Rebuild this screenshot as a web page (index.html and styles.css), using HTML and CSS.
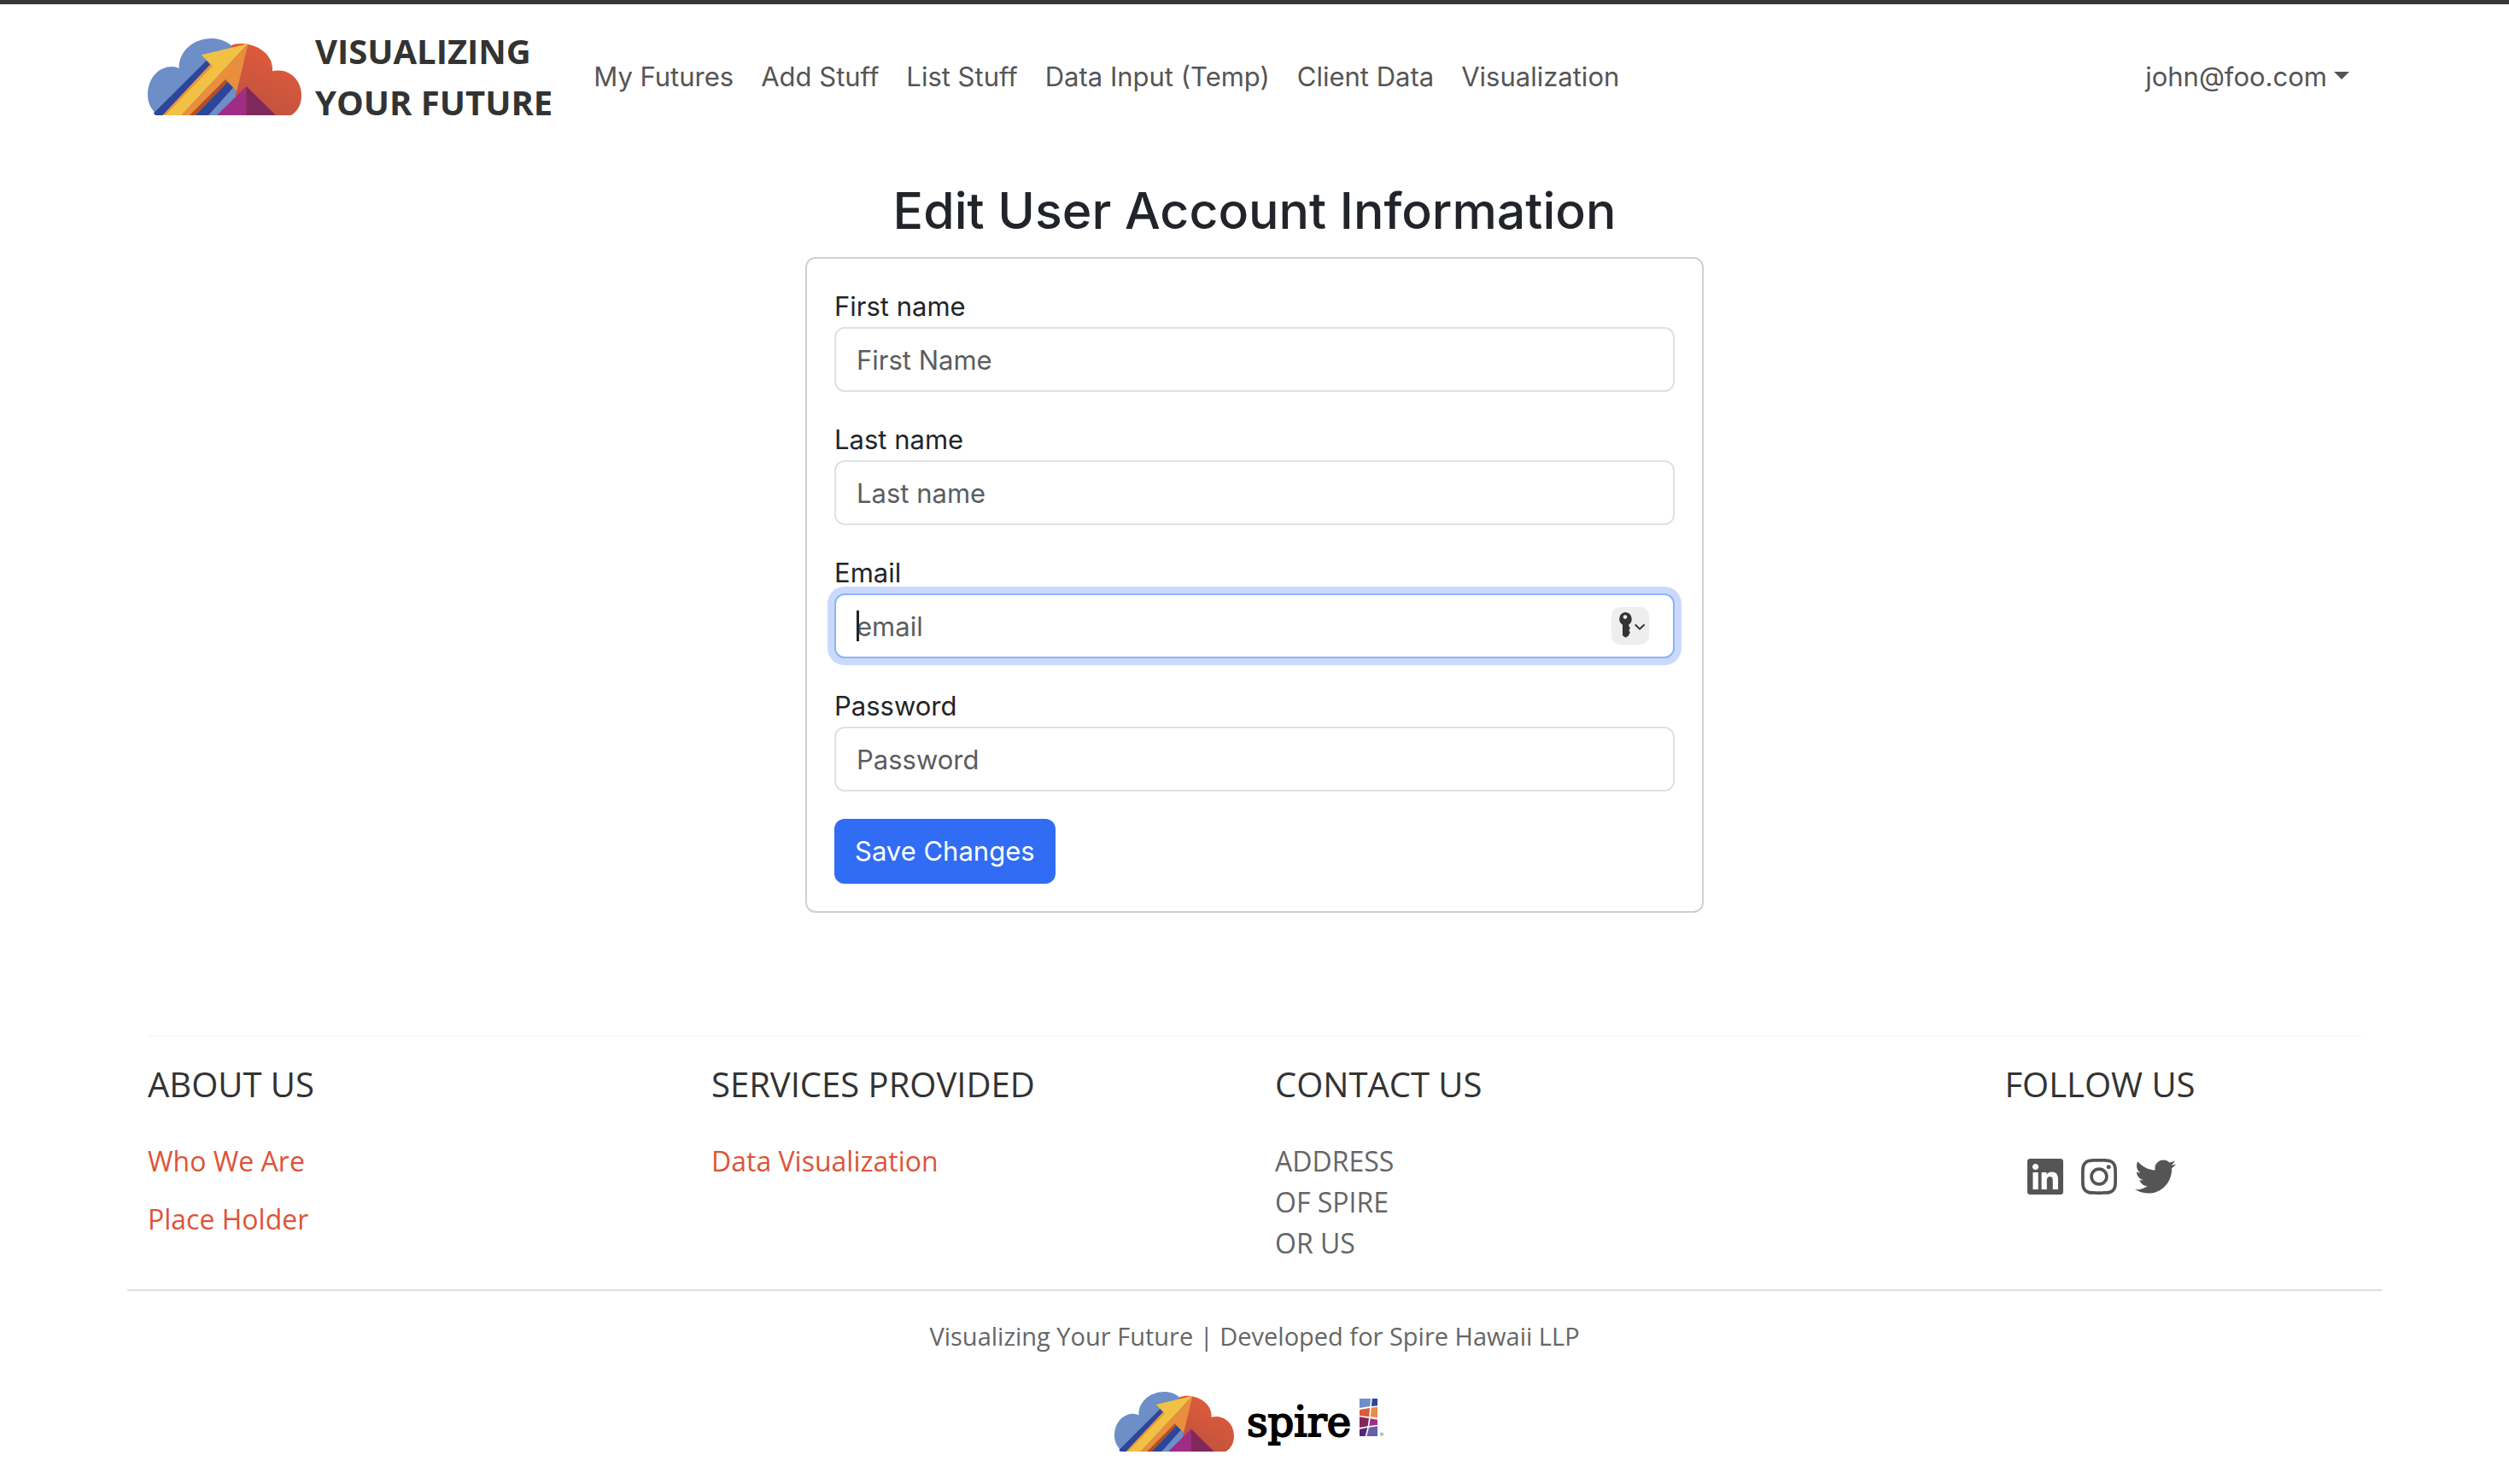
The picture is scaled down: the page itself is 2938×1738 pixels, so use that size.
FILE: index.html
```html
<!DOCTYPE html>
<html lang="en">
<head>
<meta charset="utf-8">
<meta name="viewport" content="width=device-width, initial-scale=1">
<title>Visualizing Your Future</title>
<link rel="stylesheet" href="styles.css">
</head>
<body>
<svg class="defs" aria-hidden="true">
  <defs>
    <linearGradient id="ember" x1="0.7" y1="0.2" x2="0.3" y2="0.9">
      <stop offset="0" stop-color="#dc5a3b"/>
      <stop offset="1" stop-color="#bf523f"/>
    </linearGradient>
    <symbol id="cloud" viewBox="42 135 540 270">
      <path fill="#6d8ec7" d="M70 405L64 392C49 375 42 355 42 333C42 275 80 234 127 234Q141 234 152 240C150 182 200 135 267 135C295 135 320 145 338 162L390 300L352 330L285 405Z"/>
      <path fill="url(#ember)" d="M335 160C350 153 372 151 395 156C448 166 484 205 480 250C532 236 582 275 582 335C582 368 567 393 545 405H285L350 345L352 320L340 200Z"/>
      <path fill="#2c4699" d="M248 213L62 398L70 405H97L262 228Z"/>
      <path fill="#e8963a" d="M262 226L94 405H108L275 235Z"/>
      <path fill="#f2c144" d="M395 153L230 193L270 232L104 405H160Z"/>
      <path fill="#e88e3d" d="M395 153L355 320L315 280L190 405H160Z"/>
      <path fill="#b94d1e" d="M315 279L323 288L210 405H189Z"/>
      <path fill="#6d8ec7" d="M342 308L352 320L350 345L290 405H255Z"/>
      <path fill="#2c4699" d="M323 288L342 308L255 405H210Z"/>
      <path fill="#9f2d86" d="M388 303L285 405H388Z"/>
      <path fill="#7f285c" d="M388 303V405H492Z"/>
    </symbol>
  </defs>
</svg>

<header class="site-header">
  <nav class="container navbar" aria-label="Main">
    <a class="brand" href="#">
      <svg class="brand-logo" role="img" aria-label="Cloud logo"><use href="#cloud"/></svg>
      <span class="brand-text">VISUALIZING<br>YOUR FUTURE</span>
    </a>
    <div class="nav-links">
      <a class="nav-link" href="#">My Futures</a>
      <a class="nav-link" href="#">Add Stuff</a>
      <a class="nav-link" href="#">List Stuff</a>
      <a class="nav-link" href="#">Data Input (Temp)</a>
      <a class="nav-link" href="#">Client Data</a>
      <a class="nav-link" href="#">Visualization</a>
    </div>
    <button class="account" type="button" aria-haspopup="true">john@foo.com<span class="caret"></span></button>
  </nav>
</header>

<main class="container main">
  <h2 class="title">Edit User Account Information</h2>
  <form class="card">
    <div class="field">
      <label for="first">First name</label>
      <input class="control" id="first" type="text" placeholder="First Name">
    </div>
    <div class="field">
      <label for="last">Last name</label>
      <input class="control" id="last" type="text" placeholder="Last name">
    </div>
    <div class="field">
      <label for="email">Email</label>
      <div class="control-wrap">
        <input class="control is-active" id="email" type="email" placeholder="email">
        <span class="text-cursor"></span>
        <button class="key-button" type="button" aria-label="Fill saved login">
          <svg viewBox="0 0 132 132" aria-hidden="true">
            <path fill="#333" fill-rule="evenodd" d="M48 18a24 24 0 0 1 13 43.500V66l5 8-5 7 5 8-5 8v3L50 107 39 100V62A24 24 0 0 1 48 18zM48 28a7 7 0 1 0 .1 0z"/>
            <path fill="none" stroke="#333" stroke-width="6" stroke-linecap="round" stroke-linejoin="round" d="M85 63L99 77L114 63"/>
          </svg>
        </button>
      </div>
    </div>
    <div class="field">
      <label for="password">Password</label>
      <input class="control" id="password" type="password" placeholder="Password">
    </div>
    <button class="save" type="submit">Save Changes</button>
  </form>
</main>

<footer class="container footer">
  <div class="footer-columns">
    <section>
      <h5>ABOUT US</h5>
      <ul>
        <li><a href="#">Who We Are</a></li>
        <li><a href="#">Place Holder</a></li>
      </ul>
    </section>
    <section>
      <h5>SERVICES PROVIDED</h5>
      <ul>
        <li><a href="#">Data Visualization</a></li>
      </ul>
    </section>
    <section>
      <h5>CONTACT US</h5>
      <address>ADDRESS<br>OF SPIRE<br>OR US</address>
    </section>
    <section class="follow">
      <h5>FOLLOW US</h5>
      <div class="social">
        <a href="#" aria-label="LinkedIn"><svg class="square" viewBox="0 0 448 512"><path d="M416 32H31.900C14.300 32 0 46.500 0 64.300v383.400C0 465.500 14.300 480 31.900 480H416c17.600 0 32-14.500 32-32.300V64.300c0-17.800-14.400-32.300-32-32.300zM135.400 416H69V202.200h66.500V416zm-33.200-243c-21.300 0-38.500-17.300-38.500-38.500S80.900 96 102.200 96c21.200 0 38.500 17.300 38.500 38.500 0 21.300-17.200 38.500-38.500 38.500zm282.100 243h-66.400V312c0-24.800-.5-56.700-34.500-56.700-34.600 0-39.900 27-39.900 54.900V416h-66.400V202.200h63.700v29.200h.9c8.900-16.800 30.600-34.500 62.900-34.500 67.200 0 79.700 44.300 79.700 101.900V416z"/></svg></a>
        <a href="#" aria-label="Instagram"><svg class="square" viewBox="0 0 448 512"><path d="M224.100 141c-63.600 0-114.900 51.300-114.900 114.900s51.300 114.900 114.900 114.900S339 319.500 339 255.900 287.700 141 224.100 141zm0 189.600c-41.100 0-74.700-33.500-74.700-74.700s33.500-74.700 74.700-74.700 74.700 33.500 74.700 74.700-33.600 74.700-74.700 74.700zm146.400-194.300c0 14.900-12 26.800-26.800 26.800-14.900 0-26.800-12-26.800-26.800s12-26.800 26.800-26.800 26.800 12 26.800 26.800zm76.100 27.200c-1.700-35.900-9.900-67.700-36.200-93.900-26.200-26.200-58-34.400-93.900-36.200-37-2.100-147.900-2.100-184.900 0-35.800 1.700-67.600 9.900-93.900 36.100s-34.400 58-36.200 93.900c-2.100 37-2.100 147.900 0 184.900 1.700 35.900 9.900 67.700 36.200 93.900s58 34.400 93.900 36.200c37 2.100 147.900 2.100 184.900 0 35.900-1.700 67.700-9.900 93.900-36.200 26.200-26.200 34.400-58 36.200-93.900 2.100-37 2.100-147.800 0-184.800zM398.800 388c-7.800 19.600-22.900 34.700-42.600 42.600-29.500 11.700-99.500 9-132.100 9s-102.700 2.600-132.100-9c-19.600-7.800-34.700-22.900-42.600-42.600-11.700-29.500-9-99.500-9-132.100s-2.600-102.700 9-132.100c7.800-19.600 22.900-34.700 42.600-42.600 29.500-11.700 99.500-9 132.100-9s102.700-2.600 132.100 9c19.600 7.800 34.700 22.900 42.600 42.600 11.700 29.500 9 99.500 9 132.100s2.700 102.700-9 132.100z"/></svg></a>
        <a href="#" aria-label="Twitter"><svg viewBox="0 0 512 512"><path d="M459.370 151.716c.325 4.548.325 9.097.325 13.645 0 138.720-105.583 298.558-298.558 298.558-59.452 0-114.680-17.219-161.137-47.106 8.447.974 16.568 1.299 25.340 1.299 49.055 0 94.213-16.568 130.274-44.832-46.132-.975-84.792-31.188-98.112-72.772 6.498.974 12.995 1.624 19.818 1.624 9.421 0 18.843-1.300 27.614-3.573-48.081-9.747-84.143-51.980-84.143-102.985v-1.299c13.969 7.797 30.214 12.670 47.431 13.319-28.264-18.843-46.781-51.005-46.781-87.391 0-19.492 5.197-37.360 14.294-52.954 51.655 63.675 129.300 105.258 216.365 109.807-1.624-7.797-2.599-15.918-2.599-24.040 0-57.828 46.782-104.934 104.934-104.934 30.213 0 57.502 12.670 76.670 33.137 23.715-4.548 46.456-13.320 66.599-25.340-7.798 24.366-24.366 44.833-46.132 57.827 21.117-2.273 41.584-8.122 60.426-16.243-14.292 20.791-32.161 39.308-52.628 54.253z"/></svg></a>
      </div>
    </section>
  </div>
  <div class="footer-base">
    <p>Visualizing Your Future | Developed for Spire Hawaii LLP</p>
    <div class="partners">
      <svg class="partner-cloud" role="img" aria-label="Cloud logo"><use href="#cloud"/></svg>
      <span class="spire">spire</span>
      <svg class="spire-mark" viewBox="0 0 87 132" aria-hidden="true">
        <path fill="#6d8ec7" d="M0 0H39L37 27L0 33Z"/>
        <path fill="#2c4699" d="M44 0H63V25L42 27Z"/>
        <path fill="#dc5a3b" d="M0 39L36 33L34 64L0 60Z"/>
        <path fill="#e88e3d" d="M41 32L63 29V67L39 64Z"/>
        <path fill="#7f285c" d="M0 64L33 69L29 97L0 102Z"/>
        <path fill="#9f2d86" d="M38 70L63 74V92L34 96Z"/>
        <path fill="#53287a" d="M0 107L28 102L20 132H0Z"/>
        <path fill="#6560a8" d="M33 101L63 97V132H25Z"/>
        <circle cx="78" cy="125" r="5" fill="none" stroke="#777" stroke-width="2"/>
        <circle cx="78" cy="125" r="2" fill="#777"/>
      </svg>
    </div>
  </div>
</footer>
</body>
</html>
```
FILE: styles.css
```css
* {
  box-sizing: border-box;
}

body {
  margin: 0;
  background: #fff;
  color: #212529;
  font-family: Inter, "Liberation Sans", sans-serif;
  font-size: 31px;
  line-height: 48px;
}

a {
  text-decoration: none;
}

button,
input {
  font: inherit;
}

.defs {
  position: absolute;
  width: 0;
  height: 0;
}

.container {
  width: 100%;
  max-width: 2640px;
  margin: 0 auto;
  padding: 0 24px;
}

.site-header {
  border-top: 5px solid #373735;
  padding: 25px 0;
}

.navbar {
  display: flex;
  align-items: center;
}

.brand {
  display: flex;
  align-items: center;
  gap: 16px;
  margin-right: 16px;
  color: #333;
  font: bold 40px/60px "Open Sans", sans-serif;
}

.brand-logo {
  width: 180px;
  height: 90px;
}

.nav-links {
  display: flex;
  flex: 1;
  margin-left: 16px;
}

.nav-link {
  padding: 16px;
  color: #555;
}

.account {
  display: flex;
  align-items: center;
  gap: 8px;
  border: 0;
  padding: 16px 14px;
  background: none;
  color: #555;
}

.caret {
  margin-bottom: 4px;
  border: 9px solid transparent;
  border-top-color: #555;
  border-bottom: 0;
}

.main {
  display: flex;
  flex-direction: column;
  align-items: center;
  padding-top: 34px;
}

.title {
  margin: 0 0 16px;
  font-size: 59px;
  font-weight: 500;
  line-height: 76px;
}

.card {
  width: 100%;
  max-width: 1052px;
  border: 2px solid #d0d0d1;
  border-radius: 12px;
  padding: 32px;
}

.field {
  margin-bottom: 32px;
}

.field label {
  display: block;
}

.control-wrap {
  position: relative;
}

.control {
  display: block;
  width: 100%;
  height: 76px;
  border: 2px solid #dee2e6;
  border-radius: 12px;
  padding: 12px 24px;
  background: #fff;
  color: #212529;
}

.control::placeholder {
  color: #5a5d60;
  opacity: 1;
}

.control.is-active {
  border-color: #8bb4f8;
  box-shadow: 0 0 0 8px #cbd9fc;
}

.text-cursor {
  position: absolute;
  top: 20px;
  left: 26px;
  width: 3px;
  height: 36px;
  background: #212529;
}

.key-button {
  position: absolute;
  top: 16px;
  right: 30px;
  width: 44px;
  height: 44px;
  border: 0;
  border-radius: 10px;
  padding: 0;
  background: #eee;
}

.key-button svg {
  display: block;
}

.save {
  display: block;
  height: 76px;
  border: 0;
  border-radius: 12px;
  padding: 0 24px;
  background: #316cf4;
  color: #fff;
}

.footer {
  margin-top: 143px;
  padding: 0;
  font-family: "Open Sans", sans-serif;
  font-size: 32px;
}

.footer-columns {
  display: grid;
  grid-template-columns: repeat(4, 1fr);
  position: relative;
  border-bottom: 2px solid #ddd;
  padding: 34px 0 30px;
}

.footer-columns::before {
  content: "";
  position: absolute;
  top: 0;
  left: 24px;
  right: 24px;
  height: 2px;
  background: #f8f8f8;
}

.footer section {
  padding: 0 24px;
}

.footer h5 {
  margin: 0 0 42px;
  color: #333;
  font-size: 40px;
  font-weight: 500;
  line-height: 48px;
}

.footer ul {
  margin: 0;
  padding: 0;
  list-style: none;
}

.footer li {
  margin-bottom: 20px;
}

.footer li a {
  color: #dc5539;
}

.footer address {
  color: #666;
  font-style: normal;
}

.footer .follow {
  text-align: center;
}

.social {
  display: flex;
  justify-content: center;
  gap: 21px;
  padding: 18px 0 0 4px;
}

.social svg {
  display: block;
  width: 48px;
  height: 48px;
  fill: #555;
}

.social .square {
  width: 42px;
}

.footer-base {
  display: flex;
  flex-direction: column;
  align-items: center;
  padding: 32px 0 36px;
}

.footer-base p {
  margin: 0 0 44px;
  color: #666;
  font-size: 29px;
  line-height: 42px;
}

.partners {
  display: flex;
  align-items: center;
}

.partner-cloud {
  width: 140px;
  height: 70px;
  margin-right: 15px;
}

.spire {
  color: #000;
  font: 48px/70px "DejaVu Serif", serif;
  -webkit-text-stroke: 2px #000;
}

.spire-mark {
  width: 29px;
  height: 44px;
  margin: 0 12px 10px 10px;
}
```
